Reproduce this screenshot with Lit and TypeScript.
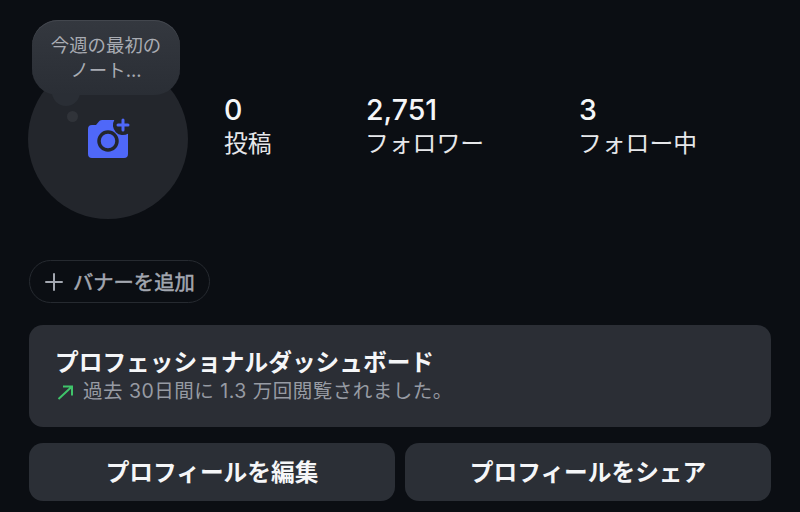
import { LitElement, html, css } from "lit";
import { customElement } from "lit/decorators.js";

@customElement("app-root")
export class AppRoot extends LitElement {
  static styles = css`
    :host {
      display: block;
      width: 800px;
      height: 512px;
      overflow: hidden;
      background: #0b0e13;
      font-family: Inter, "Noto Sans CJK JP", sans-serif;
      color: #f5f6f8;
    }
    .page { display: flex; flex-direction: column; padding: 59px 29px 0; box-sizing: border-box; height: 512px; }
    .head { display: flex; align-items: flex-start; height: 160px; }
    .avatar-wrap { position: relative; width: 160px; height: 160px; margin-left: -1px; flex: none; }
    .avatar { width: 160px; height: 160px; border-radius: 50%; background: #23262c; display: flex; align-items: center; justify-content: center; }
    .avatar svg { display: block; width: 42px; height: 42px; margin: 0 0 0 2px; }
    .bubble {
      position: absolute; left: 4px; top: -39px; width: 148px; height: 75px; box-sizing: border-box;
      border-radius: 26px; background: linear-gradient(#34383f, #2a2e35);
      box-shadow: inset 0 1px 0 #43474e;
      color: #a9acb3; font-size: 18.4px; line-height: 25px; text-align: center; padding: 13px 4px 0;
    }
    .tail { position: absolute; left: 24px; top: 30px; width: 28px; height: 17px; border-radius: 0 0 14px 14px; background: #2a2e35; }
    .dot { position: absolute; left: 39px; top: 52px; width: 11px; height: 11px; border-radius: 50%; background: #303339; }
    .stats { display: flex; margin: 36px 0 0 36px; }
    .stat { display: flex; flex-direction: column; }
    .s1 { width: 142px; }
    .s2 { width: 213px; }
    .num { font-size: 28.5px; font-weight: 500; line-height: 30px; }
    .lab { font-size: 23.8px; line-height: 35px; font-weight: 400; color: #e6e7ea; padding-top: 1px; margin-left: -1px; }
    .s1 .lab { margin-left: 0; }
    .pill {
      align-self: flex-start; margin-top: 41px; height: 43px; width: 181px; box-sizing: border-box;
      border: 1px solid #262a30; border-radius: 22px; display: flex; align-items: center; gap: 9px; padding: 0 0 2px 14px;
      color: #a3a7b0; font-size: 20.3px; font-weight: 400; -webkit-text-stroke: 0.5px #a3a7b0;
    }
    .pill svg { width: 20px; height: 20px; flex: none; margin-top: 2px; }
    .card {
      margin-top: 22px; height: 102px; box-sizing: border-box; background: #2b2e35; border-radius: 14px;
      padding: 22px 26px 0;
    }
    .title { font-size: 23.7px; line-height: 32px; font-weight: 600; color: #f5f6f8; }
    .sub { display: flex; align-items: center; gap: 8px; font-size: 19.5px; line-height: 25px; color: #979ba3; letter-spacing: .5px; }
    .sub svg { width: 20px; height: 20px; flex: none; }
    .btns { display: flex; gap: 10px; margin-top: 16px; }
    .btn {
      flex: 1; height: 58px; box-sizing: border-box; padding-bottom: 2px; border-radius: 14px; background: #2b2f36; display: flex; align-items: center; justify-content: center;
      font-size: 23.7px; font-weight: 600; color: #f5f6f8;
    }
  `;

  render() {
    return html`
      <div class="page">
        <div class="head">
          <div class="avatar-wrap">
            <div class="avatar">
              <svg viewBox="0 0 42 42">
                <path fill="#4f68f8" d="M14 2H26.300A10 10 0 0 0 40 15.700V36a4 4 0 0 1-4 4H4a4 4 0 0 1-4-4V11a4 4 0 0 1 4-4h4l2.500-3a4 4 0 0 1 3.500-2z"/>
                <circle cx="20" cy="23" r="9" fill="#4f68f8" stroke="#23262c" stroke-width="3.500"/>
                <path d="M35 2v10M30 7h10" stroke="#4f68f8" stroke-width="3" stroke-linecap="round" fill="none"/>
              </svg>
            </div>
            <div class="tail"></div>
            <div class="bubble">今週の最初の<br />ノート...</div>
            <div class="dot"></div>
          </div>
          <div class="stats">
            <div class="stat s1"><span class="num">0</span><span class="lab">投稿</span></div>
            <div class="stat s2"><span class="num">2,751</span><span class="lab">フォロワー</span></div>
            <div class="stat"><span class="num">3</span><span class="lab">フォロー中</span></div>
          </div>
        </div>
        <div class="pill">
          <svg viewBox="0 0 20 20"><path d="M10 2v16M2 10h16" stroke="#a3a7b0" stroke-width="2" stroke-linecap="round"/></svg>
          <span>バナーを追加</span>
        </div>
        <div class="card">
          <div class="title">プロフェッショナルダッシュボード</div>
          <div class="sub">
            <svg viewBox="0 0 20 20"><path d="M3.500 17 17 4.500M8 4.500h9v9" stroke="#3fc46a" stroke-width="2" fill="none"/></svg>
            <span>過去 30日間に 1.3 万回閲覧されました。</span>
          </div>
        </div>
        <div class="btns">
          <div class="btn">プロフィールを編集</div>
          <div class="btn">プロフィールをシェア</div>
        </div>
      </div>
    `;
  }
}
